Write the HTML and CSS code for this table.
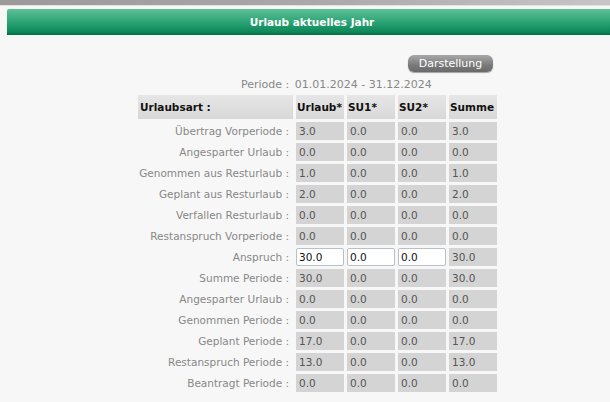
FILE: index.html
```html
<!DOCTYPE html>
<html lang="de">
<head>
<meta charset="utf-8">
<title>Urlaub aktuelles Jahr</title>
<link rel="stylesheet" href="styles.css">
</head>
<body>
<div class="topbar"></div>
<div class="frame">
  <div class="title">Urlaub aktuelles Jahr</div>
  <div class="content">
    <div class="toolbar"><button class="btn">Darstellung</button></div>
    <div class="periode"><span class="plabel">Periode :</span> 01.01.2024 - 31.12.2024</div>
    <table class="grid">
      <colgroup>
        <col class="c-label">
        <col class="c-val"><col class="c-val"><col class="c-val"><col class="c-val">
      </colgroup>
      <thead>
        <tr>
          <th class="hlabel">Urlaubsart :</th>
          <th>Urlaub*</th>
          <th>SU1*</th>
          <th>SU2*</th>
          <th>Summe</th>
        </tr>
      </thead>
      <tbody>
        <tr><td class="lbl">Übertrag Vorperiode :</td><td><span class="v">3.0</span></td><td><span class="v">0.0</span></td><td><span class="v">0.0</span></td><td><span class="v">3.0</span></td></tr>
        <tr><td class="lbl">Angesparter Urlaub :</td><td><span class="v">0.0</span></td><td><span class="v">0.0</span></td><td><span class="v">0.0</span></td><td><span class="v">0.0</span></td></tr>
        <tr><td class="lbl">Genommen aus Resturlaub :</td><td><span class="v">1.0</span></td><td><span class="v">0.0</span></td><td><span class="v">0.0</span></td><td><span class="v">1.0</span></td></tr>
        <tr><td class="lbl">Geplant aus Resturlaub :</td><td><span class="v">2.0</span></td><td><span class="v">0.0</span></td><td><span class="v">0.0</span></td><td><span class="v">2.0</span></td></tr>
        <tr><td class="lbl">Verfallen Resturlaub :</td><td><span class="v">0.0</span></td><td><span class="v">0.0</span></td><td><span class="v">0.0</span></td><td><span class="v">0.0</span></td></tr>
        <tr><td class="lbl">Restanspruch Vorperiode :</td><td><span class="v">0.0</span></td><td><span class="v">0.0</span></td><td><span class="v">0.0</span></td><td><span class="v">0.0</span></td></tr>
        <tr><td class="lbl">Anspruch :</td><td><input class="inp" value="30.0"></td><td><input class="inp" value="0.0"></td><td><input class="inp" value="0.0"></td><td><span class="v">30.0</span></td></tr>
        <tr><td class="lbl">Summe Periode :</td><td><span class="v">30.0</span></td><td><span class="v">0.0</span></td><td><span class="v">0.0</span></td><td><span class="v">30.0</span></td></tr>
        <tr><td class="lbl">Angesparter Urlaub :</td><td><span class="v">0.0</span></td><td><span class="v">0.0</span></td><td><span class="v">0.0</span></td><td><span class="v">0.0</span></td></tr>
        <tr><td class="lbl">Genommen Periode :</td><td><span class="v">0.0</span></td><td><span class="v">0.0</span></td><td><span class="v">0.0</span></td><td><span class="v">0.0</span></td></tr>
        <tr><td class="lbl">Geplant Periode :</td><td><span class="v">17.0</span></td><td><span class="v">0.0</span></td><td><span class="v">0.0</span></td><td><span class="v">17.0</span></td></tr>
        <tr><td class="lbl">Restanspruch Periode :</td><td><span class="v">13.0</span></td><td><span class="v">0.0</span></td><td><span class="v">0.0</span></td><td><span class="v">13.0</span></td></tr>
        <tr><td class="lbl">Beantragt Periode :</td><td><span class="v">0.0</span></td><td><span class="v">0.0</span></td><td><span class="v">0.0</span></td><td><span class="v">0.0</span></td></tr>
      </tbody>
    </table>
  </div>
</div>
</body>
</html>
```

FILE: styles.css
```css
* { box-sizing: border-box; }
html, body {
  margin: 0;
  padding: 0;
  background: #f7f7f7;
  font-family: "DejaVu Sans", Verdana, sans-serif;
  font-size: 10.5px;
  color: #333;
}
.topbar {
  height: 6px;
  background: linear-gradient(to right, #9a9a9a, #a8a8a8 50%, #c6c6c6);
  border-bottom: 1px solid #eadede;
}
.frame {
  margin-top: 3px;
  padding-left: 6px;
}
.title {
  height: 26px;
  margin-left: 1px;
  padding-left: 7px;
  background: linear-gradient(to bottom, #5ec196, #2ba374 55%, #0a8555);
  border-bottom: 2px solid #087548;
  border-radius: 2px 0 0 0;
  color: #fff;
  font-weight: bold;
  font-size: 10.5px;
  text-align: center;
  line-height: 27px;
}
.content {
  padding: 20px 0 0 129px;
}
.toolbar {
  width: 361px;
  display: flex;
  justify-content: flex-end;
  padding-right: 3px;
}
.btn {
  height: 17px;
  width: 85px;
  padding: 0;
  border: 0;
  border-radius: 6px;
  background: linear-gradient(to bottom, #a8a8a8, #7a7a7a 60%, #6a6a6a);
  box-shadow: 0 1px 1px rgba(0,0,0,0.35);
  color: #fff;
  font-family: "DejaVu Sans", Verdana, sans-serif;
  font-size: 11px;
  line-height: 17px;
}
.periode {
  margin-top: 5px;
  padding-left: 106px;
  height: 15px;
  line-height: 15px;
  color: #888;
  font-size: 11px;
}
.plabel { margin-right: 2px; }
.grid {
  margin-top: 0;
  border-collapse: separate;
  border-spacing: 3px;
  table-layout: fixed;
  width: 365px;
}
.c-label { width: 155px; }
.c-val { width: 48px; }
.grid th {
  height: 24px;
  padding: 0 1px;
  background: linear-gradient(to bottom, #e6e6e6, #d8d8d8);
  color: #111;
  font-weight: bold;
  font-size: 10.5px;
  text-align: left;
  white-space: nowrap;
  overflow: hidden;
}
.grid th.hlabel {
  padding-left: 2px;
}
.grid td {
  padding: 0;
  height: 18px;
}
.grid td.lbl {
  text-align: right;
  padding-right: 4px;
  color: #888;
  white-space: nowrap;
}
.v, .inp {
  display: block;
  width: 48px;
  height: 18px;
  line-height: 18px;
  padding: 0 3px;
  background: #d4d4d4;
  color: #555;
  font-family: "DejaVu Sans", Verdana, sans-serif;
  font-size: 10.5px;
}
.inp {
  background: #fff;
  color: #111;
  border: 1px solid #b8c0c8;
  border-radius: 2px;
  line-height: 16px;
  padding: 0 2px;
  margin: 0;
}
```
